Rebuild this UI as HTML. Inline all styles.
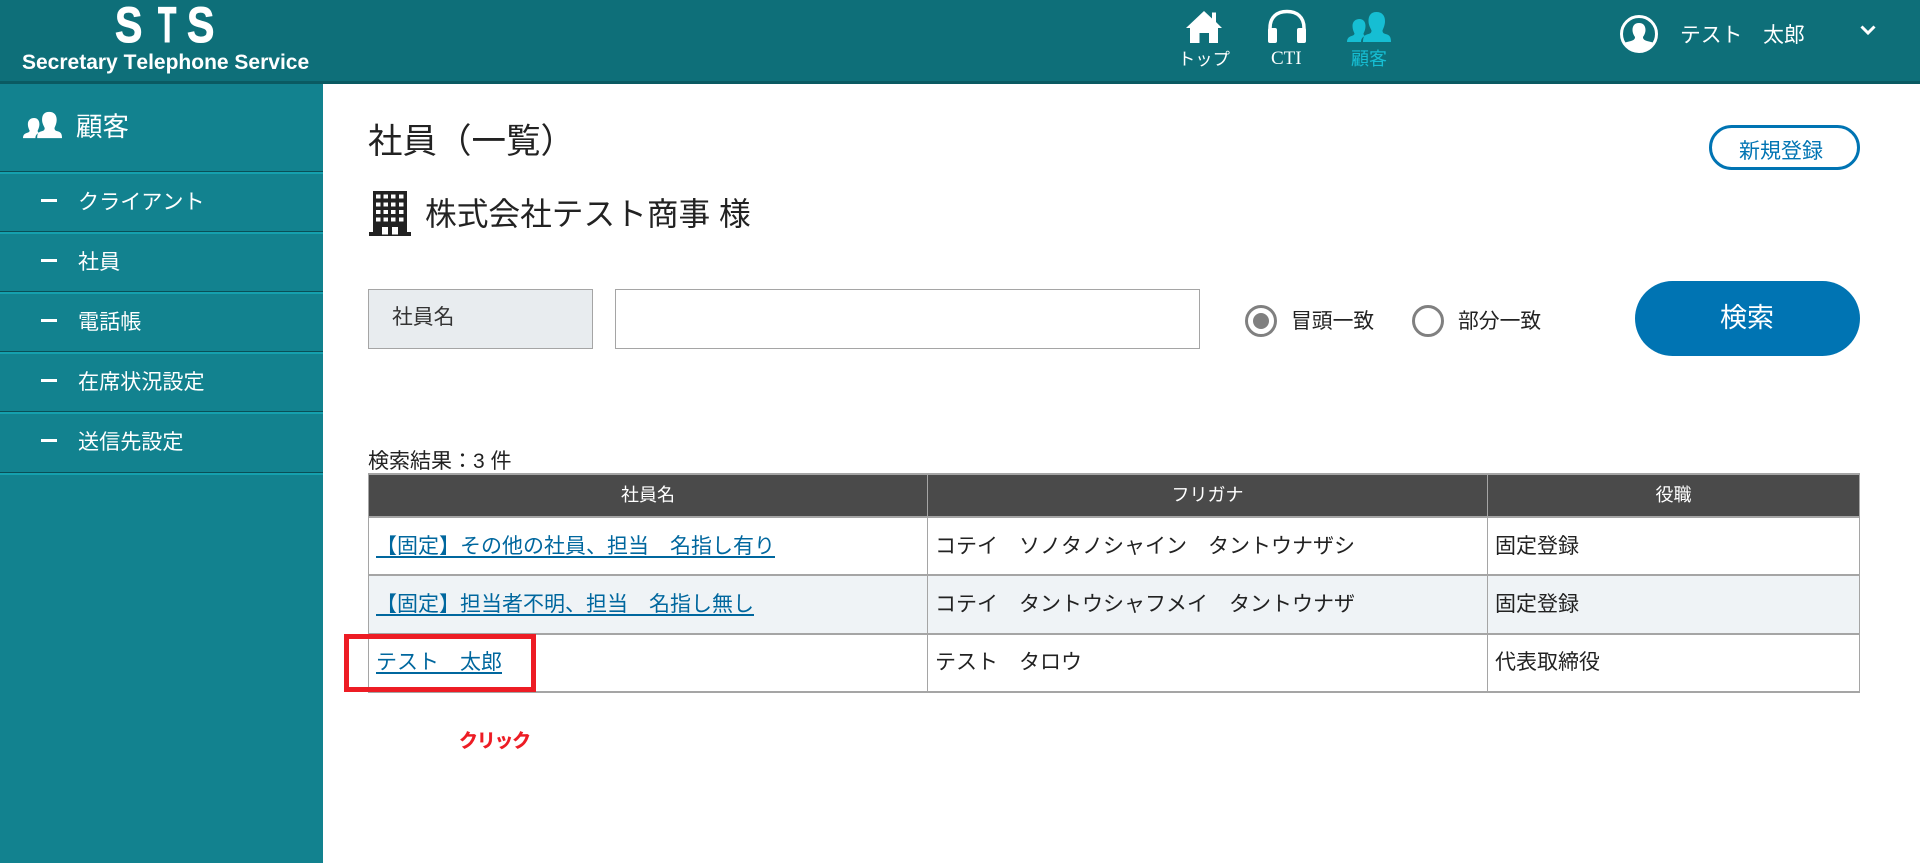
<!DOCTYPE html>
<html lang="ja"><head><meta charset="utf-8"><title>社員（一覧）</title>
<style>
*{box-sizing:border-box;margin:0;padding:0}
html,body{width:1920px;height:863px;overflow:hidden;background:#fff}
body{position:relative;font-family:"Liberation Sans","Noto Sans CJK JP",sans-serif;color:#222;text-spacing-trim:space-all;font-kerning:none}
.a{position:absolute;white-space:nowrap}
.w{color:#fff}
#hd{left:0;top:0;width:1920px;height:84px;background:#0e6f79;border-bottom:3px solid #0a5a62}
#sb{left:0;top:84px;width:323px;height:779px;background:#12828f}
.ln{position:absolute;left:0;width:323px;height:3px;background:linear-gradient(#0a4f57 0,#0a4f57 1px,#15a0ae 1px,#15a0ae 3px)}
.dash{position:absolute;left:41px;width:16px;height:3px;background:#fff}
.it{position:absolute;left:78px;color:#fff;font-size:21.100px;line-height:30px;white-space:nowrap}
.sts{position:absolute;top:-3px;font-size:50px;font-weight:700;line-height:56px;color:#fff;transform-origin:0 0;-webkit-text-stroke:1px #fff}
.h{position:absolute;background:#a5a5a5;left:368px;width:1492px;height:2px}
.v{position:absolute;background:#a5a5a5;top:474px;width:1px;height:218px}
.th{position:absolute;top:480px;color:#fff;font-size:18px;line-height:30px;text-align:center}
.td{position:absolute;font-size:21px;line-height:30px;white-space:nowrap;color:#222}
.td a{color:#00679e;text-decoration:underline;text-decoration-thickness:2px;text-underline-offset:3px}
.rd{position:absolute;top:305px;width:32px;height:32px;border:3px solid #808080;border-radius:50%;background:#fff}
</style></head><body>
<div class="a" id="hd"></div>
<div class="sts" style="left:115px;transform:scaleX(.82)">S</div>
<div class="sts" style="left:158px;transform:scaleX(.6)">T</div>
<div class="sts" style="left:187px;transform:scaleX(.82)">S</div>
<div class="a w" style="left:22px;top:50px;font-size:21px;font-weight:700;line-height:26px">Secretary Telephone Service</div>

<svg class="a" style="left:1185px;top:9px" width="38" height="36" viewBox="0 0 38 36"><path fill="#fff" d="M19 2 27 9.500V3.500H31V13L37 19H33V34H24V24H14.500V34H5V19H1Z"/></svg>
<div class="a w" style="left:1178px;top:47px;font-size:17.300px;line-height:24px">トップ</div>
<svg class="a" style="left:1267px;top:9px" width="40" height="36" viewBox="0 0 40 36"><path fill="none" stroke="#fff" stroke-width="3.500" d="M3 28V19C3 8 10 2.500 20 2.500s17 5.500 17 16.500v9"/><rect x="1" y="19" width="9" height="15" rx="2" fill="#fff"/><rect x="30" y="19" width="9" height="15" rx="2" fill="#fff"/></svg>
<div class="a w" style="left:1271px;top:47px;font-family:'Liberation Serif',serif;font-size:19px;line-height:24px">CTI</div>
<svg class="a" style="left:1347px;top:11px" width="44" height="32" viewBox="0 0 44 32"><path fill="#16bed3" d="M29.500 1c5.500 0 8.500 3.500 8.500 9c0 4-1.500 7-2.500 9.500c0 2 1 3 3 3.500c4 1 5.500 2.500 5.500 8H16c0-5.500 1.500-7 5.500-8c2-.5 3-1.500 3-3.500c-1-2.500-3-5.500-3-9.500c0-5.500 2.500-9 8-9ZM12.500 8c3.500 0 6 2.500 6 7c0 3-1 5.500-2 7.500c0 1 .5 2 1.500 2.500c-2.500 1-4 3-4 6H0c0-3.500 1.500-5 4.500-6c2-.5 3-1.500 3-2.500c-1-2-2-4.500-2-7.500c0-4.500 3-7 7-7Z"/></svg>
<div class="a" style="left:1351px;top:47px;font-size:18px;line-height:24px;color:#16bed3">顧客</div>

<svg class="a" style="left:1620px;top:15px" width="39" height="39" viewBox="0 0 39 39"><defs><clipPath id="c"><circle cx="19" cy="19" r="18"/></clipPath></defs><circle cx="19" cy="19" r="17.500" fill="none" stroke="#fff" stroke-width="3"/><path clip-path="url(#c)" fill="#fff" d="M19 8c4.500 0 6.500 3 6.500 7c0 3-1.500 5.500-2.500 7c0 2 1 3 4 4l8 2V39H3V28l8-2c3-1 4-2 4-4c-1-1.500-2.500-4-2.500-7c0-4 2-7 6.500-7Z"/></svg>
<div class="a w" style="left:1680px;top:21px;font-size:20.800px;line-height:30px">テスト　太郎</div>
<svg class="a" style="left:1860px;top:25px" width="16" height="11" viewBox="0 0 16 11"><path fill="none" stroke="#fff" stroke-width="3" d="M1.500 1.500 8 8l6.500-6.500"/></svg>

<div class="a" id="sb">
<div class="ln" style="top:87px"></div><div class="ln" style="top:147px"></div><div class="ln" style="top:207px"></div><div class="ln" style="top:267px"></div><div class="ln" style="top:327px"></div><div class="ln" style="top:388px"></div>
<div class="dash" style="top:115px"></div><div class="it" style="top:101px;padding-top:3px">クライアント</div>
<div class="dash" style="top:175px"></div><div class="it" style="top:161px;padding-top:3px">社員</div>
<div class="dash" style="top:235px"></div><div class="it" style="top:221px;padding-top:3px">電話帳</div>
<div class="dash" style="top:295px"></div><div class="it" style="top:281px;padding-top:3px">在席状況設定</div>
<div class="dash" style="top:355px"></div><div class="it" style="top:341px;padding-top:3px">送信先設定</div>
</div>
<svg class="a" style="left:23px;top:111px" width="39" height="28" viewBox="0 0 44 32" preserveAspectRatio="none"><path fill="#fff" d="M29.500 1c5.500 0 8.500 3.500 8.500 9c0 4-1.500 7-2.500 9.500c0 2 1 3 3 3.500c4 1 5.500 2.500 5.500 8H16c0-5.500 1.500-7 5.500-8c2-.5 3-1.500 3-3.500c-1-2.500-3-5.500-3-9.500c0-5.500 2.500-9 8-9ZM12.500 8c3.500 0 6 2.500 6 7c0 3-1 5.500-2 7.500c0 1 .5 2 1.500 2.500c-2.500 1-4 3-4 6H0c0-3.500 1.500-5 4.500-6c2-.5 3-1.500 3-2.500c-1-2-2-4.500-2-7.500c0-4.500 3-7 7-7Z"/></svg>
<div class="a w" style="left:76px;top:108px;font-size:26.500px;line-height:38px">顧客</div>

<div class="a" style="left:368px;top:119px;font-size:34.500px;line-height:46px">社員（一覧）</div>
<svg class="a" style="left:369px;top:191px" width="42" height="45" viewBox="0 0 42 45"><path fill="#222" d="M4 0H38V41H42V45H0V41H4Z"/><g fill="#fff"><rect x="7" y="3.500" width="4.500" height="4"/><rect x="14.500" y="3.500" width="4.500" height="4"/><rect x="22" y="3.500" width="4.500" height="4"/><rect x="30" y="3.500" width="4.500" height="4"/><rect x="7" y="11.500" width="4.500" height="4"/><rect x="14.500" y="11.500" width="4.500" height="4"/><rect x="22" y="11.500" width="4.500" height="4"/><rect x="30" y="11.500" width="4.500" height="4"/><rect x="7" y="19" width="4.500" height="4"/><rect x="14.500" y="19" width="4.500" height="4"/><rect x="22" y="19" width="4.500" height="4"/><rect x="30" y="19" width="4.500" height="4"/><rect x="7" y="26.500" width="4.500" height="4"/><rect x="14.500" y="26.500" width="4.500" height="4"/><rect x="22" y="26.500" width="4.500" height="4"/><rect x="30" y="26.500" width="4.500" height="4"/><rect x="13" y="36" width="6" height="7.500"/><rect x="23" y="36" width="6" height="7.500"/></g></svg>
<div class="a" style="left:425px;top:191px;font-size:31.700px;line-height:46px">株式会社テスト商事 様</div>

<div class="a" style="left:1709px;top:125px;width:151px;height:45px;border:3px solid #0074b3;border-radius:23px"></div>
<div class="a" style="left:1739px;top:137px;color:#0074b3;font-size:21px;line-height:30px">新規登録</div>

<div class="a" style="left:368px;top:289px;width:225px;height:60px;background:#e8ecef;border:1px solid #a5a5a5"></div>
<div class="a" style="left:392px;top:303px;font-size:20.800px;line-height:30px;color:#333">社員名</div>
<div class="a" style="left:615px;top:289px;width:585px;height:60px;background:#fff;border:1px solid #a5a5a5"></div>

<div class="rd" style="left:1245px"></div><div class="a" style="left:1253px;top:313px;width:16px;height:16px;border-radius:50%;background:#808080"></div>
<div class="a" style="left:1291px;top:307px;font-size:20.800px;line-height:30px">冒頭一致</div>
<div class="rd" style="left:1412px"></div>
<div class="a" style="left:1458px;top:307px;font-size:20.800px;line-height:30px">部分一致</div>
<div class="a" style="left:1635px;top:281px;width:225px;height:75px;background:#0074b3;border-radius:38px"></div>
<div class="a w" style="left:1720px;top:298px;font-size:27px;line-height:40px">検索</div>

<div class="a" style="left:368px;top:448px;font-size:21px;line-height:28px">検索結果：3 件</div>

<div class="a" style="left:368px;top:473px;width:1492px;height:44px;background:#4a4a4a"></div>
<div class="a" style="left:369px;top:575px;width:1490px;height:58px;background:#eff3f6"></div>
<div class="h" style="top:473px"></div><div class="h" style="top:516px"></div><div class="h" style="top:574px"></div><div class="h" style="top:633px"></div><div class="h" style="top:691px"></div>
<div class="v" style="left:368px"></div><div class="v" style="left:927px"></div><div class="v" style="left:1487px"></div><div class="v" style="left:1859px"></div>
<div class="th" style="left:369px;width:558px">社員名</div>
<div class="th" style="left:928px;width:559px">フリガナ</div>
<div class="th" style="left:1488px;width:371px">役職</div>

<div class="td" style="left:376px;top:532px"><a>【固定】その他の社員、担当　名指し有り</a></div>
<div class="td" style="left:935px;top:532px">コテイ　ソノタノシャイン　タントウナザシ</div>
<div class="td" style="left:1495px;top:532px">固定登録</div>
<div class="td" style="left:376px;top:590px"><a>【固定】担当者不明、担当　名指し無し</a></div>
<div class="td" style="left:935px;top:590px">コテイ　タントウシャフメイ　タントウナザ</div>
<div class="td" style="left:1495px;top:590px">固定登録</div>
<div class="td" style="left:376px;top:648px"><a>テスト　太郎</a></div>
<div class="td" style="left:935px;top:648px">テスト　タロウ</div>
<div class="td" style="left:1495px;top:648px">代表取締役</div>

<div class="a" style="left:344px;top:634px;width:192px;height:58px;border:5px solid #ed1c24"></div>
<div class="a" style="left:459px;top:729px;font-size:19px;letter-spacing:-1.300px;font-weight:700;line-height:26px;color:#ed1c24;-webkit-text-stroke:.3px #ed1c24">クリック</div>
</body></html>
